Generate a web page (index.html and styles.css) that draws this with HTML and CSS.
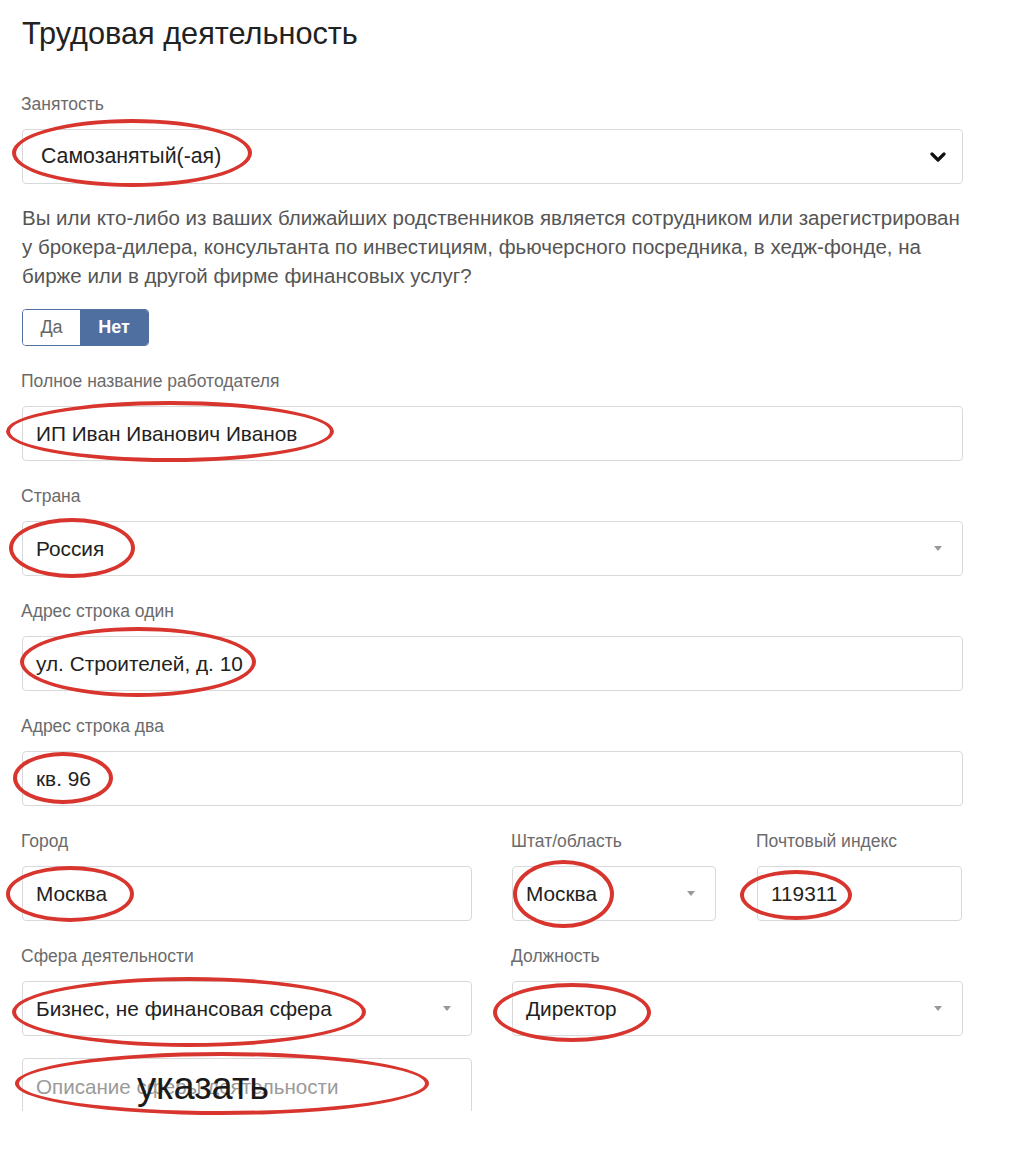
FILE: index.html
```html
<!DOCTYPE html>
<html lang="ru">
<head>
<meta charset="utf-8">
<title>Трудовая деятельность</title>
<link rel="stylesheet" href="styles.css">
</head>
<body>
<div class="page">
  <h1 class="title">Трудовая деятельность</h1>

  <div class="group">
    <div class="label">Занятость</div>
    <div class="field field-native">
      <span class="value">Самозанятый(-ая)</span>
      <svg class="chevron" width="16" height="12" viewBox="0 0 16 12"><path d="M2 3 L8 9 L14 3" fill="none" stroke="#111" stroke-width="3.2" stroke-linecap="round" stroke-linejoin="round"/></svg>
    </div>
  </div>

  <p class="question">Вы или кто-либо из ваших ближайших родственников является сотрудником или зарегистрирован у брокера-дилера, консультанта по инвестициям, фьючерсного посредника, в хедж-фонде, на бирже или в другой фирме финансовых услуг?</p>

  <div class="toggle">
    <span class="toggle-btn">Да</span>
    <span class="toggle-btn active">Нет</span>
  </div>

  <div class="group">
    <div class="label">Полное название работодателя</div>
    <div class="field"><span class="value">ИП Иван Иванович Иванов</span></div>
  </div>

  <div class="group">
    <div class="label">Страна</div>
    <div class="field"><span class="value">Россия</span><span class="caret"></span></div>
  </div>

  <div class="group">
    <div class="label">Адрес строка один</div>
    <div class="field"><span class="value">ул. Строителей, д. 10</span></div>
  </div>

  <div class="group">
    <div class="label">Адрес строка два</div>
    <div class="field"><span class="value">кв. 96</span></div>
  </div>

  <div class="row row-address">
    <div class="group">
      <div class="label">Город</div>
      <div class="field"><span class="value">Москва</span></div>
    </div>
    <div class="group">
      <div class="label">Штат/область</div>
      <div class="field"><span class="value">Москва</span><span class="caret"></span></div>
    </div>
    <div class="group">
      <div class="label">Почтовый индекс</div>
      <div class="field"><span class="value">119311</span></div>
    </div>
  </div>

  <div class="row row-job">
    <div class="group">
      <div class="label">Сфера деятельности</div>
      <div class="field"><span class="value">Бизнес, не финансовая сфера</span><span class="caret"></span></div>
    </div>
    <div class="group">
      <div class="label">Должность</div>
      <div class="field"><span class="value">Директор</span><span class="caret"></span></div>
    </div>
  </div>

  <div class="row row-job">
    <div class="textarea-clip">
      <div class="textarea"><span class="placeholder">Описание сферы деятельности</span></div>
    </div>
  </div>

  <div class="mark m1"></div>
  <div class="mark m2"></div>
  <div class="mark m3"></div>
  <div class="mark m4"></div>
  <div class="mark m5"></div>
  <div class="mark m6"></div>
  <div class="mark m7"></div>
  <div class="mark m8"></div>
  <div class="mark m9"></div>
  <div class="mark m10"></div>
  <div class="mark m11"></div>
  <div class="note">указать</div>
</div>
</body>
</html>
```

FILE: styles.css
```css
* { box-sizing: border-box; }

html, body {
  margin: 0;
  padding: 0;
  background: #fff;
}

body {
  font-family: "Liberation Sans", Arial, sans-serif;
  color: #333;
}

.page {
  position: relative;
  width: 1024px;
  height: 1168px;
  padding: 0 61px 0 22px;
  overflow: hidden;
}

.title {
  margin: 0;
  padding-top: 16px;
  height: 94px;
  font-size: 30.7px;
  font-weight: normal;
  color: #222;
  line-height: 36px;
}

.group {
  margin-bottom: 25px;
}

.label {
  font-size: 17.5px;
  line-height: 20px;
  color: #6b6b6b;
  margin-bottom: 15px;
  margin-left: -1px;
  white-space: nowrap;
}

.field {
  position: relative;
  height: 55px;
  border: 1px solid #d9d9d9;
  border-radius: 4px;
  display: flex;
  align-items: center;
  padding: 0 14px 0 13px;
  background: #fff;
}

.field-native {
  padding-left: 18px;
}

.value {
  font-size: 20.8px;
  color: #222;
}

.field-native .value {
  font-size: 21.3px;
}

.chevron {
  margin-left: auto;
  margin-right: 2px;
}

.caret {
  margin-left: auto;
  margin-right: 6px;
  width: 0;
  height: 0;
  border-left: 4px solid transparent;
  border-right: 4px solid transparent;
  border-top: 5px solid #999;
}

.question {
  margin: -6px 0 0;
  font-size: 20.5px;
  line-height: 29px;
  color: #555;
}

.toggle {
  display: inline-flex;
  margin-top: 19px;
  margin-bottom: 25px;
  height: 37px;
  border: 1px solid #4f6fa0;
  border-radius: 4px;
  overflow: hidden;
}

.toggle-btn {
  display: flex;
  align-items: center;
  justify-content: center;
  font-size: 18px;
  color: #666;
  width: 57px;
  background: #fff;
}

.toggle-btn.active {
  width: 68px;
  background: #4f6fa0;
  color: #fff;
  font-weight: bold;
}

.row {
  display: grid;
  column-gap: 40px;
}

.row-address {
  grid-template-columns: 450px 204px 206px;
  column-gap: 40px;
}

.row-address .group:nth-child(3) {
  margin-left: 1px;
}

.row-job {
  grid-template-columns: 450px 451px;
}

.row-job .group {
  margin-bottom: 22px;
}

.textarea-clip {
  height: 53px;
  overflow: hidden;
}

.textarea {
  height: 80px;
  border: 1px solid #d9d9d9;
  border-radius: 4px;
  padding: 16px 14px 0 13px;
}

.placeholder {
  font-size: 20.6px;
  color: #9a9a9a;
}

/* annotation ellipses drawn over the screenshot */
.mark {
  position: absolute;
  border: 4px solid #d7352d;
  border-radius: 50%;
}

.m1 { left: 12px; top: 119px; width: 240px; height: 68px; }
.m2 { left: 6px; top: 401px; width: 328px; height: 61px; }
.m3 { left: 9px; top: 518px; width: 126px; height: 60px; }
.m4 { left: 20px; top: 627px; width: 236px; height: 70px; }
.m5 { left: 13px; top: 752px; width: 100px; height: 52px; }
.m6 { left: 6px; top: 866px; width: 128px; height: 56px; }
.m7 { left: 513px; top: 860px; width: 101px; height: 68px; }
.m8 { left: 740px; top: 870px; width: 112px; height: 50px; }
.m9 { left: 12px; top: 977px; width: 354px; height: 70px; }
.m10 { left: 493px; top: 983px; width: 158px; height: 59px; }
.m11 { left: 15px; top: 1052px; width: 414px; height: 63px; }

.note {
  position: absolute;
  left: 137px;
  top: 1064px;
  font-size: 38px;
  line-height: 44px;
  color: #1a1a1a;
}
```
